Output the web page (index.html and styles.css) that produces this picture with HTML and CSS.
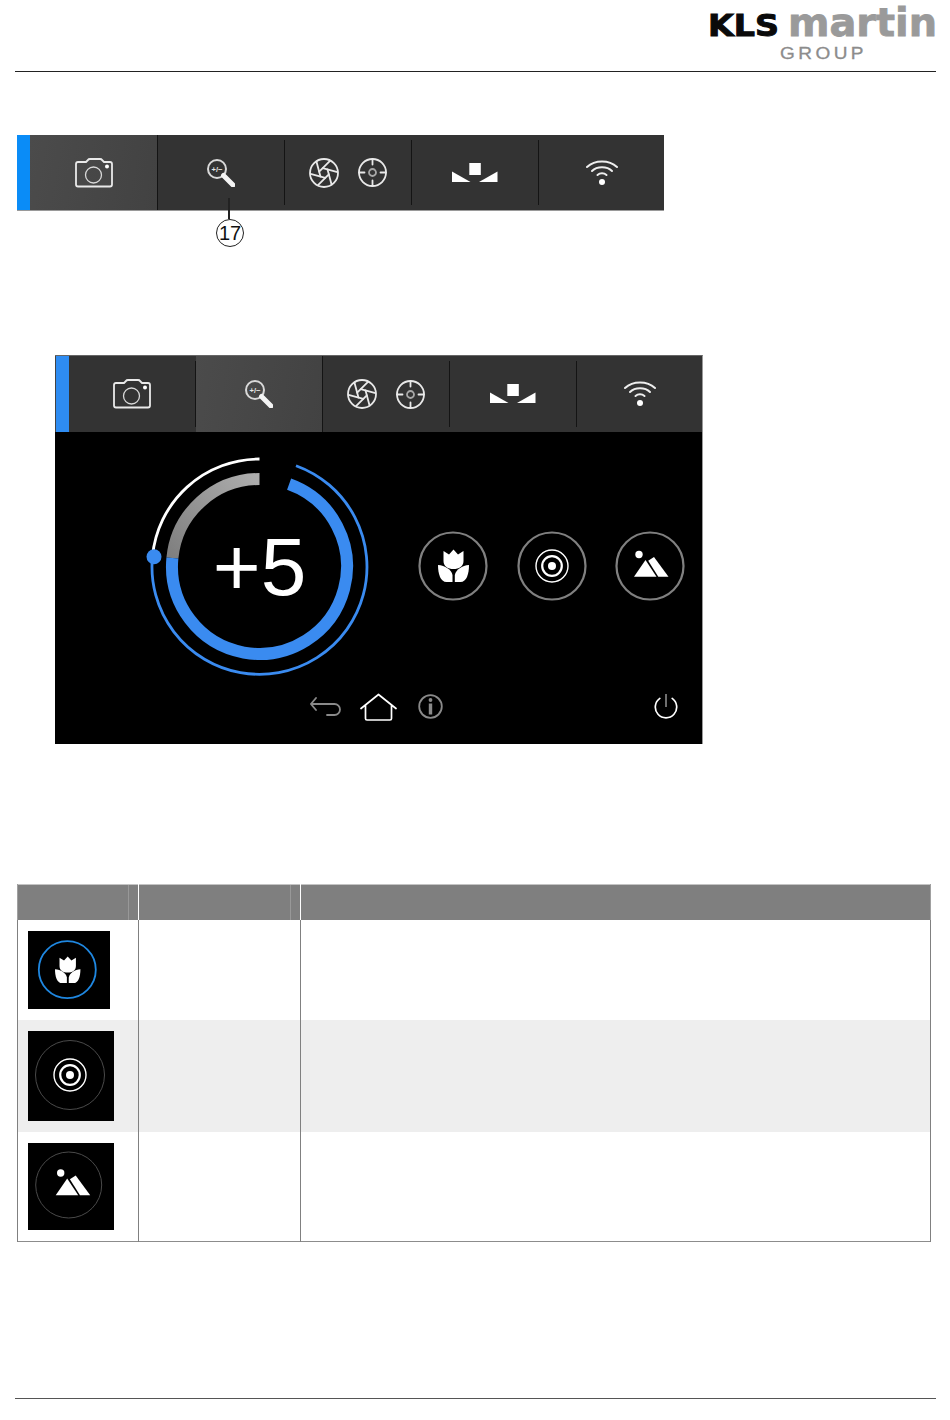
FILE: index.html
```html
<!DOCTYPE html>
<html lang="en">
<head>
<meta charset="utf-8">
<title>KLS Martin</title>
<link rel="stylesheet" href="styles.css">
</head>
<body>
<svg class="defs" aria-hidden="true">
  <defs>
    <g id="i-camera" class="ln">
      <path d="M3,4 H11 L13,2 Q13.5,1 15,1 H25 Q26.5,1 27,2 L29,4 H35 Q37,4 37,6 V26.500 Q37,28.500 35,28.500 H3 Q1,28.500 1,26.500 V6 Q1,4 3,4 Z"/>
      <circle class="thin" cx="18.500" cy="17" r="8"/>
      <circle class="fill" cx="32" cy="8.500" r="2"/>
    </g>
    <g id="i-zoom">
      <circle class="lens" cx="10" cy="10" r="9"/>
      <path class="thick" d="M16.500,16.500 L26,26"/>
      <text class="plus" x="10" y="12.500">+/−</text>
    </g>
    <g id="i-aperture" class="ln">
      <circle r="14"/>
      <path transform="rotate(15)" d="M5,0 L-2.640,13.240"/>
      <path transform="rotate(75)" d="M5,0 L-2.640,13.240"/>
      <path transform="rotate(135)" d="M5,0 L-2.640,13.240"/>
      <path transform="rotate(195)" d="M5,0 L-2.640,13.240"/>
      <path transform="rotate(255)" d="M5,0 L-2.640,13.240"/>
      <path transform="rotate(315)" d="M5,0 L-2.640,13.240"/>
    </g>
    <g id="i-target" class="ln">
      <circle r="13.500"/>
      <circle class="dim" r="3.500"/>
      <path d="M0,-13.500 V-8 M0,13.500 V8 M-13.500,0 H-8 M13.500,0 H8"/>
    </g>
    <g id="i-light" class="fill">
      <rect x="17.300" y="0" width="11.500" height="12"/>
      <path d="M0,8.500 L18.500,19 H0 Z"/>
      <path d="M45.500,8.500 V19 H27 Z"/>
    </g>
    <g id="i-wifi">
      <path class="wave" d="M1,7 C9,-0.500 23,-0.500 31,7"/>
      <path class="wave" d="M6,11 C11,6 21,6 26,11"/>
      <path class="wave" d="M11.500,15 C14,12.800 18,12.800 20.500,15"/>
      <circle class="fill" cx="16" cy="22" r="3"/>
    </g>
    <g id="i-tulip" class="fill">
      <path d="M-9.500,-15 L-4,-11.500 L0.500,-16.500 L5,-11.500 L10.500,-15 L10.500,-5 C10.500,0.500 6,3 0.500,3 C-5,3 -9.500,0.500 -9.500,-5 Z"/>
      <path d="M-15,-1 C-8,-0.500 -1.500,3.500 -0.500,9 V16 H-6.500 C-12.500,16 -15,8 -15,-1 Z"/>
      <path d="M16,-1 C9,-0.500 3,3.500 1.800,9 V16 H7.500 C13.500,16 16,8 16,-1 Z"/>
    </g>
    <g id="i-rings">
      <circle class="ring1" r="16"/>
      <circle class="ring2" r="9.800"/>
      <circle class="fill" r="4"/>
    </g>
    <g id="i-mountain" class="fill">
      <circle cx="-11" cy="-11.500" r="3.700"/>
      <path d="M-4.500,-6 L6.500,10.700 H-16 Z"/>
      <path d="M-1.800,-5.200 L4,-9 L18.500,10.700 H8.300 Z"/>
    </g>
    <linearGradient id="grey-arc" gradientUnits="userSpaceOnUse" x1="114" y1="27" x2="27" y2="106">
      <stop offset="0" stop-color="#adadad"/>
      <stop offset="1" stop-color="#7f7f7f"/>
    </linearGradient>
  </defs>
</svg>

<div class="page">
  <header class="top">
    <svg class="logo" viewBox="0 0 232 66" width="232" height="66" role="img" aria-label="KLS martin GROUP">
      <text class="logo-kls" x="3" y="35.500" textLength="71" lengthAdjust="spacingAndGlyphs">KLS</text>
      <text class="logo-martin" x="83" y="36" textLength="149" lengthAdjust="spacingAndGlyphs">martin</text>
      <text class="logo-group" x="75" y="59" textLength="87" lengthAdjust="spacingAndGlyphs">GROUP</text>
    </svg>
  </header>

  <section class="shot-one">
    <div class="tabs tabs-edge">
      <div class="tab-marker marker-a"></div>
      <div class="tab tab-w active"><svg width="38" height="30" viewBox="0 0 38 30"><use href="#i-camera"/></svg></div>
      <div class="sep sep-full"></div>
      <div class="tab"><svg width="28" height="28" viewBox="0 0 28 28"><use href="#i-zoom"/></svg></div>
      <div class="sep"></div>
      <div class="tab tab-pair">
        <svg width="30" height="30" viewBox="-15 -15 30 30"><use href="#i-aperture"/></svg>
        <svg width="29" height="29" viewBox="-14.500 -14.500 29 29"><use href="#i-target"/></svg>
      </div>
      <div class="sep"></div>
      <div class="tab"><svg width="46" height="20" viewBox="0 0 46 20"><use href="#i-light"/></svg></div>
      <div class="sep"></div>
      <div class="tab tab-l"><svg width="32" height="26" viewBox="0 0 32 26"><use href="#i-wifi"/></svg></div>
    </div>
    <div class="callout">
      <div class="callout-line"></div>
      <div class="callout-num">17</div>
    </div>
  </section>

  <section class="screen">
    <div class="tabs">
      <div class="tab-marker marker-b"></div>
      <div class="tab"><svg width="38" height="30" viewBox="0 0 38 30"><use href="#i-camera"/></svg></div>
      <div class="sep"></div>
      <div class="tab active"><svg width="28" height="28" viewBox="0 0 28 28"><use href="#i-zoom"/></svg></div>
      <div class="sep sep-full"></div>
      <div class="tab tab-pair">
        <svg width="30" height="30" viewBox="-15 -15 30 30"><use href="#i-aperture"/></svg>
        <svg width="29" height="29" viewBox="-14.500 -14.500 29 29"><use href="#i-target"/></svg>
      </div>
      <div class="sep"></div>
      <div class="tab"><svg width="46" height="20" viewBox="0 0 46 20"><use href="#i-light"/></svg></div>
      <div class="sep"></div>
      <div class="tab tab-l"><svg width="32" height="26" viewBox="0 0 32 26"><use href="#i-wifi"/></svg></div>
    </div>

    <div class="stage">
      <svg class="gauge" width="230" height="230" viewBox="0 0 230 230">
        <path class="arc-white" d="M114.500,7 A107.500,107.500 0 0 0 7.450,104.700"/>
        <path class="arc-blue-thin" d="M151,13.700 A107.500,107.500 0 1 1 7.450,104.700"/>
        <path class="arc-grey" d="M114.500,27 A87.500,87.500 0 0 0 27.400,106"/>
        <path class="arc-blue" d="M144.100,32.100 A87.500,87.500 0 1 1 27.400,106"/>
        <circle class="knob" cx="9" cy="104.700" r="7.500"/>
        <text class="gauge-value" x="114.500" y="143">+5</text>
      </svg>
      <div class="modes">
        <svg width="70" height="70" viewBox="-35 -35 70 70"><circle class="mode-ring" r="33.500"/><use href="#i-tulip"/></svg>
        <svg width="70" height="70" viewBox="-35 -35 70 70"><circle class="mode-ring" r="33.500"/><use href="#i-rings"/></svg>
        <svg width="70" height="70" viewBox="-35 -35 70 70"><circle class="mode-ring" r="33.500"/><use href="#i-mountain"/></svg>
      </div>
    </div>

    <div class="softkeys">
      <svg class="key-back" width="32" height="21" viewBox="0 0 32 21"><path class="key-dim" d="M6,2 L1,8 L6,14 M1,8 H24.500 A5.500,5.500 0 0 1 24.500,19 H17"/></svg>
      <svg class="key-home" width="37" height="28" viewBox="0 0 37 28"><path class="key-bright" d="M1,15.500 L18.500,1.500 L36,15.500 M5.500,12 V25.500 Q5.500,27 7,27 H30 Q31.500,27 31.500,25.500 V12"/></svg>
      <svg class="key-info" width="25" height="25" viewBox="-12.500 -12.500 25 25"><circle class="key-dim" r="11.300"/><circle class="key-fill" cy="-6.500" r="1.900"/><rect class="key-fill" x="-1.700" y="-3" width="3.400" height="11"/></svg>
      <svg class="key-power" width="24" height="25" viewBox="-12 -13 24 25"><path class="key-bright" d="M-6.200,-8.600 A10.700,10.700 0 1 0 6.200,-8.600"/><path class="key-thin" d="M0,-13 V0"/></svg>
    </div>
  </section>

  <table class="legend">
    <colgroup>
      <col class="col-a"><col class="col-b"><col class="col-c">
    </colgroup>
    <thead>
      <tr><th><span class="th-mark"></span></th><th><span class="th-mark"></span></th><th></th></tr>
    </thead>
    <tbody>
      <tr class="row-a">
        <td>
          <svg class="thumb" width="82" height="78" viewBox="0 0 82 78">
            <circle class="thumb-blue" cx="39.300" cy="38.700" r="28.500"/>
            <use href="#i-tulip" transform="translate(39.300 39) scale(.82)"/>
          </svg>
        </td><td></td><td></td>
      </tr>
      <tr class="row-b">
        <td>
          <svg class="thumb" width="86" height="90" viewBox="0 0 86 90">
            <circle class="thumb-ring" cx="42" cy="44" r="34.500"/>
            <use href="#i-rings" transform="translate(42 44)"/>
          </svg>
        </td><td></td><td></td>
      </tr>
      <tr class="row-c">
        <td>
          <svg class="thumb" width="86" height="87" viewBox="0 0 86 87">
            <circle class="thumb-ring" cx="40.700" cy="42" r="33"/>
            <use href="#i-mountain" transform="translate(43.700 41.500)"/>
          </svg>
        </td><td></td><td></td>
      </tr>
    </tbody>
  </table>

  <footer class="bottom"></footer>
</div>
</body>
</html>
```

FILE: styles.css
```css
* { box-sizing: border-box; }

html, body {
  margin: 0;
  padding: 0;
  background: #fff;
}

.defs {
  position: absolute;
  width: 0;
  height: 0;
}

.ln {
  fill: none;
  stroke: #e9e9e9;
  stroke-width: 1.800;
  stroke-linecap: round;
  stroke-linejoin: round;
}

.fill,
.ln .fill {
  fill: #fff;
  stroke: none;
}

.dim { stroke: #a8a8a8; }
.thin { stroke-width: 1.300; stroke: #d8d8d8; }

.lens {
  fill: none;
  stroke: #d9d9d9;
  stroke-width: 2;
}

.wave {
  fill: none;
  stroke: #eee;
  stroke-width: 2;
  stroke-linecap: round;
}

.thick {
  fill: none;
  stroke: #f4f4f4;
  stroke-width: 5;
  stroke-linecap: round;
}

.plus {
  fill: #e6e6e6;
  stroke: none;
  font: bold 7.500px "Liberation Sans", sans-serif;
  text-anchor: middle;
}

.ring1 { fill: none; stroke: #fff; stroke-width: 1.400; }
.ring2 { fill: none; stroke: #fff; stroke-width: 2.200; }

.page {
  width: 950px;
  height: 1420px;
  overflow: hidden;
  font-family: "Liberation Sans", Arial, sans-serif;
}

/* header */
.top {
  display: flex;
  justify-content: flex-end;
  height: 72px;
  margin: 0 14px 0 15px;
  border-bottom: 1px solid #222;
}

.logo { margin-right: -1px; }

.logo-kls {
  font: bold 30px "DejaVu Sans", sans-serif;
  fill: #0a0a0a;
  stroke: #0a0a0a;
  stroke-width: 1;
}

.logo-martin {
  font: bold 38.500px "DejaVu Sans", sans-serif;
  fill: #9a9a9a;
  stroke: #9a9a9a;
  stroke-width: .8;
}

.logo-group {
  font: 16.500px "Liberation Sans", sans-serif;
  letter-spacing: 3px;
  fill: #8c8c8c;
  stroke: #8c8c8c;
  stroke-width: .3;
}

/* tab bar */
.tabs {
  display: flex;
  height: 76px;
  background: #333;
}

.tabs-edge {
  border-bottom: 1px solid #9a9a9a;
}

.tab-marker {
  width: 13px;
  flex: none;
}

.marker-a { background: #0a8cf7; }

.marker-b {
  width: 14px;
  background: #2e8cf2;
  border-left: 1px solid #444;
}

.tab {
  display: flex;
  align-items: center;
  justify-content: center;
  width: 126px;
  flex: none;
}

.tab-w { width: 127px; }
.tab-l { width: 125px; }
.tab-pair { gap: 19px; }

.tab.active {
  background: linear-gradient(100deg, #4b4b4b, #424242);
}

.sep {
  width: 1px;
  flex: none;
  margin: 5px 0;
  background: #141414;
}

.sep-full { margin: 0; }

/* callout */
.shot-one {
  position: relative;
  width: 647px;
  margin: 63px 0 0 17px;
}

.callout {
  position: absolute;
  left: 199px;
  top: 63px;
  width: 28px;
  display: flex;
  flex-direction: column;
  align-items: center;
}

.callout-line {
  width: 2px;
  height: 21px;
  margin-right: 2px;
  background: #222;
}

.callout-num {
  width: 28px;
  height: 28px;
  border: 1px solid #222;
  border-radius: 50%;
  color: #111;
  font-size: 20px;
  line-height: 27px;
  text-align: center;
}

/* device screen */
.screen {
  width: 648px;
  height: 389px;
  margin: 144px 0 0 55px;
  background: #000;
  border-top: 1px solid #666;
  border-right: 1px solid #999;
}

.stage {
  display: flex;
  align-items: center;
  height: 250px;
  padding: 20px 0 0 90px;
}

.gauge { flex: none; }

.arc-white { fill: none; stroke: #fff; stroke-width: 2.800; }
.arc-blue-thin { fill: none; stroke: #3a8bf0; stroke-width: 2.800; }
.arc-grey { fill: none; stroke: url(#grey-arc); stroke-width: 12; }
.arc-blue { fill: none; stroke: #3a8bf0; stroke-width: 12; }
.knob { fill: #3a8bf0; }

.gauge-value {
  font: 82px "Liberation Sans", sans-serif;
  fill: #fff;
  text-anchor: middle;
}

.modes {
  display: flex;
  gap: 28.500px;
  margin: 0 0 2px 43px;
}

.mode-ring {
  fill: none;
  stroke: #808080;
  stroke-width: 2.200;
}

.softkeys {
  display: flex;
  align-items: center;
  height: 62px;
  padding: 0 24px 13px 255px;
}

.key-back { margin-right: 18px; }
.key-home { margin-right: 21px; }
.key-power { margin-left: auto; }

.key-dim { fill: none; stroke: #8a8a8a; stroke-width: 1.800; stroke-linecap: round; }
.key-fill { fill: #8a8a8a; }
.key-bright { fill: none; stroke: #fff; stroke-width: 1.700; stroke-linecap: round; stroke-linejoin: round; }
.key-thin { fill: none; stroke: #ddd; stroke-width: 1; }

/* table */
.legend {
  width: 914px;
  margin: 140px 0 0 17px;
  border-collapse: collapse;
  table-layout: fixed;
  border: 1px solid #8c8c8c;
  border-top-color: #c4c4c4;
}

.col-a { width: 121px; }
.col-b { width: 162px; }

.legend th {
  position: relative;
  height: 35px;
  padding: 0;
  background: #7f7f7f;
  border-left: 1px solid #fff;
  border-right: 1px solid #fff;
}

.legend th:first-child { border-left: 1px solid #a0a0a0; }
.legend th:last-child { border-right: 1px solid #a0a0a0; }

.th-mark {
  position: absolute;
  top: 0;
  right: 9px;
  bottom: 0;
  width: 1px;
  background: #989898;
}

.legend td {
  padding: 11px 0 0 10px;
  border-left: 1px solid #808080;
  border-right: 1px solid #808080;
  vertical-align: top;
}

.row-a td { height: 100px; }
.row-b td { height: 112px; background: #eee; }
.row-c td { height: 110px; }

.thumb {
  display: block;
  background: #000;
}

.thumb-blue { fill: none; stroke: #1f87e0; stroke-width: 1.800; }
.thumb-ring { fill: none; stroke: #4a4a4a; stroke-width: 1; }

/* footer */
.bottom {
  height: 1px;
  margin: 156px 14px 0 15px;
  background: #555;
}
```
